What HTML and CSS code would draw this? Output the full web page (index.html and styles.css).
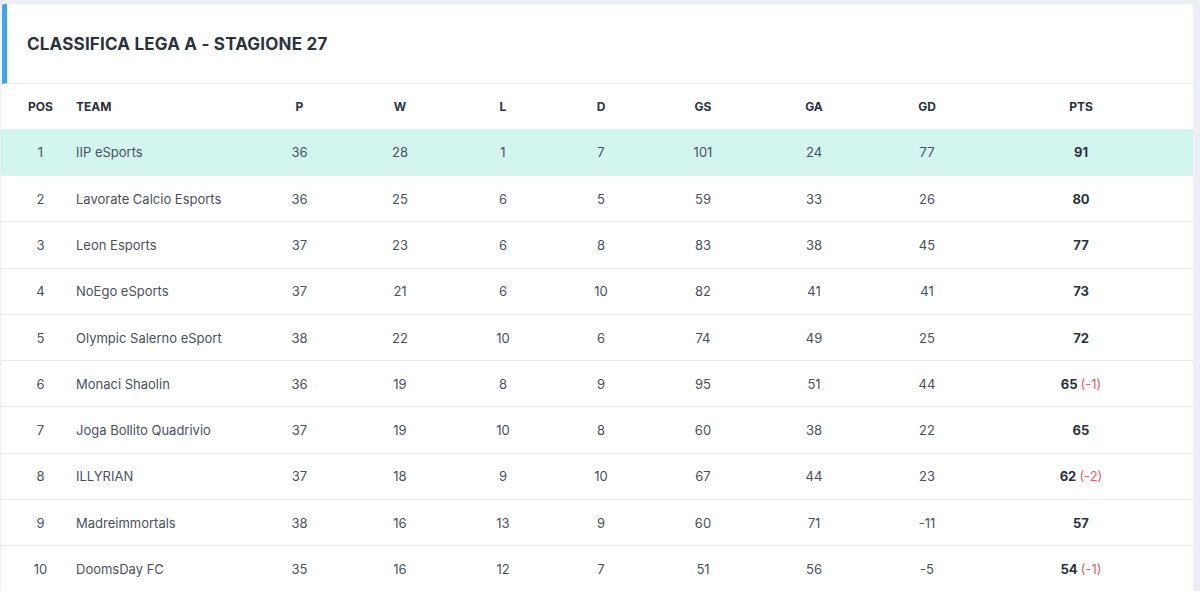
FILE: index.html
```html
<!DOCTYPE html>
<html lang="it">
<head>
  <meta charset="UTF-8">
  <title>Classifica Lega A</title>
  <link rel="stylesheet" href="styles.css">
</head>
<body>
  <div class="card">
    <div class="card-header">
      <h2>Classifica Lega A - Stagione 27</h2>
    </div>
    <table class="standings">
      <colgroup>
        <col class="c-pos"><col class="c-team"><col class="c-p"><col class="c-w"><col class="c-l">
        <col class="c-d"><col class="c-gs"><col class="c-ga"><col class="c-gd"><col class="c-pts"><col>
      </colgroup>
      <thead>
        <tr>
          <th class="pos">POS</th><th class="team">TEAM</th><th>P</th><th>W</th><th>L</th>
          <th>D</th><th>GS</th><th>GA</th><th>GD</th><th>PTS</th><th></th>
        </tr>
      </thead>
      <tbody>
        <tr class="leader">
          <td class="pos">1</td><td class="team">IIP eSports</td><td>36</td><td>28</td><td>1</td>
          <td>7</td><td>101</td><td>24</td><td>77</td><td class="pts">91</td><td></td>
        </tr>
        <tr>
          <td class="pos">2</td><td class="team">Lavorate Calcio Esports</td><td>36</td><td>25</td><td>6</td>
          <td>5</td><td>59</td><td>33</td><td>26</td><td class="pts">80</td><td></td>
        </tr>
        <tr>
          <td class="pos">3</td><td class="team">Leon Esports</td><td>37</td><td>23</td><td>6</td>
          <td>8</td><td>83</td><td>38</td><td>45</td><td class="pts">77</td><td></td>
        </tr>
        <tr>
          <td class="pos">4</td><td class="team">NoEgo eSports</td><td>37</td><td>21</td><td>6</td>
          <td>10</td><td>82</td><td>41</td><td>41</td><td class="pts">73</td><td></td>
        </tr>
        <tr>
          <td class="pos">5</td><td class="team">Olympic Salerno eSport</td><td>38</td><td>22</td><td>10</td>
          <td>6</td><td>74</td><td>49</td><td>25</td><td class="pts">72</td><td></td>
        </tr>
        <tr>
          <td class="pos">6</td><td class="team">Monaci Shaolin</td><td>36</td><td>19</td><td>8</td>
          <td>9</td><td>95</td><td>51</td><td>44</td><td class="pts">65 <span class="penalty">(-1)</span></td><td></td>
        </tr>
        <tr>
          <td class="pos">7</td><td class="team">Joga Bollito Quadrivio</td><td>37</td><td>19</td><td>10</td>
          <td>8</td><td>60</td><td>38</td><td>22</td><td class="pts">65</td><td></td>
        </tr>
        <tr>
          <td class="pos">8</td><td class="team">ILLYRIAN</td><td>37</td><td>18</td><td>9</td>
          <td>10</td><td>67</td><td>44</td><td>23</td><td class="pts">62 <span class="penalty">(-2)</span></td><td></td>
        </tr>
        <tr>
          <td class="pos">9</td><td class="team">Madreimmortals</td><td>38</td><td>16</td><td>13</td>
          <td>9</td><td>60</td><td>71</td><td>-11</td><td class="pts">57</td><td></td>
        </tr>
        <tr>
          <td class="pos">10</td><td class="team">DoomsDay FC</td><td>35</td><td>16</td><td>12</td>
          <td>7</td><td>51</td><td>56</td><td>-5</td><td class="pts">54 <span class="penalty">(-1)</span></td><td></td>
        </tr>
      </tbody>
    </table>
  </div>
</body>
</html>
```

FILE: styles.css
```css
body {
  margin: 0;
  padding: 4px 7px 0 1px;
  background: #eceef5;
  font-family: "Inter", "DejaVu Sans", sans-serif;
  color: #4a5160;
}

.card {
  background: #fff;
  border-radius: 4px 4px 0 0;
  overflow: hidden;
}

.card-header {
  height: 79px;
  border-left: 5px solid #3ea2f6;
  margin-left: 1px;
  border-bottom: 1px solid #e9eaef;
  display: flex;
  align-items: center;
  padding-left: 20px;
}

.card-header h2 {
  margin: 0;
  padding-top: 1px;
  font-size: 17px;
  font-weight: 700;
  text-transform: uppercase;
  color: #2b3240;
  letter-spacing: 0.2px;
}

.standings {
  width: 100%;
  border-collapse: collapse;
  table-layout: fixed;
  font-size: 13px;
}

.c-pos { width: 75px; }
.c-team { width: 173px; }
.c-p { width: 101px; }
.c-w { width: 100px; }
.c-l { width: 106px; }
.c-d { width: 90px; }
.c-gs { width: 114px; }
.c-ga { width: 108px; }
.c-gd { width: 118px; }
.c-pts { width: 190px; }

.standings th,
.standings td {
  padding: 0;
  text-align: center;
}

.standings th {
  height: 45px;
  font-size: 12px;
  font-weight: 700;
  color: #2b3240;
}

.standings td {
  height: 45.3px;
  font-weight: 400;
}

.standings .leader td { height: 46px; }

.standings tbody tr + tr td {
  border-top: 1px solid #ebebf0;
}

.standings .pos { padding-left: 4px; }
.standings .team { text-align: left; }

.leader td { background: #d2f5ee; }

.standings .pts {
  font-weight: 700;
  color: #2b3240;
}

.penalty {
  font-weight: 400;
  color: #e0625f;
}
```
